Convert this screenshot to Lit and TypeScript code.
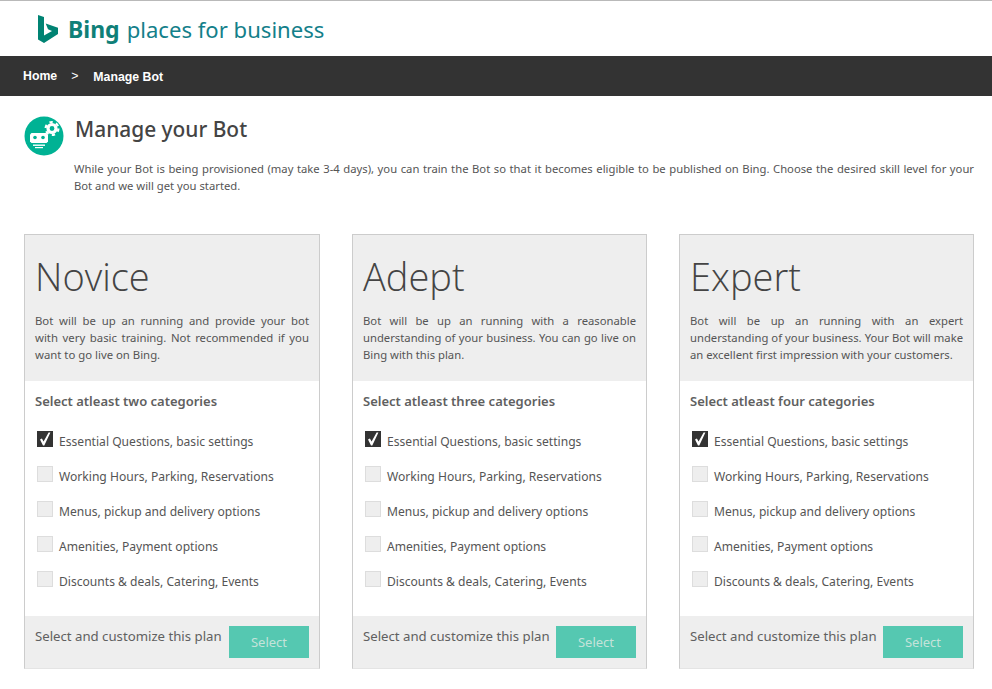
import { LitElement, html, css } from "lit";
import { customElement } from "lit/decorators.js";

const items = [
  "Essential Questions, basic settings",
  "Working Hours, Parking, Reservations",
  "Menus, pickup and delivery options",
  "Amenities, Payment options",
  "Discounts & deals, Catering, Events",
];

const plans = [
  {
    name: "Novice",
    desc: "Bot will be up an running and provide your bot with very basic training. Not recommended if you want to go live on Bing.",
    sel: "Select atleast two categories",
  },
  {
    name: "Adept",
    desc: "Bot will be up an running with a reasonable understanding of your business. You can go live on Bing with this plan.",
    sel: "Select atleast three categories",
  },
  {
    name: "Expert",
    desc: "Bot will be up an running with an expert understanding of your business. Your Bot will make an excellent first impression with your customers.",
    sel: "Select atleast four categories",
  },
];

@customElement("app-root")
export class AppRoot extends LitElement {
  static styles = css`
    :host {
      display: block;
      width: 992px;
      height: 689px;
      overflow: hidden;
      background: #fff;
      font-family: "Noto Sans", "Open Sans", sans-serif;
      color: #444;
    }
    .top {
      border-top: 1px solid #b9b9b9;
      display: flex;
      align-items: center;
      gap: 10px;
      padding-left: 38px;
      box-sizing: border-box;
      height: 56px;
    }
    .logo {
      flex: none;
    }
    .brand {
      font-size: 22.1px;
      color: #13808a;
      display: flex;
      align-items: baseline;
      gap: 7px;
    }
    .brand b {
      font-size: 23px;
      font-weight: 700;
      color: #0f8078;
    }
    .nav {
      height: 40px;
      background: #333;
      color: #fff;
      display: flex;
      align-items: center;
      padding-left: 23px;
      font-family: "Liberation Sans", sans-serif;
      font-size: 12.3px;
      font-weight: 700;
    }
    .nav .sep {
      margin: 0 15px 0 14px;
      font-weight: 400;
    }
    .nav .cur {
      padding-top: 2px;
    }
    .head {
      display: flex;
      padding: 20px 18px 0 24px;
      gap: 10px;
    }
    .icon {
      width: 40px;
      height: 40px;
      flex: none;
    }
    h1 {
      margin: -1px 0 0 1px;
      font-size: 20.9px;
      font-weight: 500;
      line-height: 28px;
      color: #444;
    }
    .intro {
      margin: 17px 0 0;
      font-size: 11.25px;
      line-height: 17px;
      text-align: justify;
      color: #555;
    }
    .cards {
      display: flex;
      gap: 32px;
      margin-top: 40px;
      padding: 0 18px 0 24px;
    }
    .card {
      flex: none;
      width: 295px;
      box-sizing: border-box;
      height: 435px;
      border: 1px solid #ccc;
      border-bottom: 1px solid #e4e4e4;
      display: flex;
      flex-direction: column;
    }
    .card:first-child {
      width: 296px;
    }
    .hero {
      background: #eee;
      height: 146px;
      box-sizing: border-box;
      padding: 15px 10px 0;
      flex: none;
    }
    .hero h2 {
      margin: 0;
      font-size: 38px;
      font-weight: 300;
      line-height: 52px;
      color: #444;
      font-family: "Open Sans", sans-serif;
    }
    .hero p {
      margin: 10px 0 0;
      font-size: 11.27px;
      line-height: 17px;
      text-align: justify;
      color: #555;
    }
    .card:first-child .hero p {
      font-size: 11.35px;
    }
    .body {
      flex: 1;
      padding: 10px 10px 0;
    }
    .sel {
      font-size: 13px;
      font-weight: 600;
      line-height: 20px;
      color: #606060;
      margin-bottom: 12px;
    }
    .row {
      display: flex;
      align-items: center;
      gap: 6px;
      height: 35px;
      font-size: 12.1px;
      color: #555;
      padding-left: 2px;
    }
    .row span {
      margin-top: 2px;
    }
    .box {
      width: 16px;
      height: 16px;
      box-sizing: border-box;
      background: #eee;
      border: 1px solid #ddd;
      flex: none;
      margin-top: -3px;
      display: flex;
      align-items: center;
      justify-content: center;
    }
    .box.on {
      background: #333;
      border-color: #333;
    }
    .foot {
      height: 52px;
      background: #eee;
      flex: none;
      display: flex;
      padding: 10px 10px 0;
      box-sizing: border-box;
      justify-content: space-between;
    }
    .foot span {
      font-size: 13.2px;
      color: #606060;
      line-height: 20px;
    }
    .btn {
      width: 80px;
      height: 32px;
      background: #55c8b1;
      color: #c4e3da;
      font-size: 13px;
      display: flex;
      align-items: center;
      justify-content: center;
    }
  `;

  render() {
    return html`
      <div class="top">
        <svg class="logo" width="20" height="28" viewBox="0 0 20 28" aria-hidden="true">
          <path fill="#008373" d="M0 0 6 2V20.5L14 16 10 14.2 7.7 8.5 20 12.8V19L6 28 0 24.5Z" />
        </svg>
        <div class="brand"><b>Bing</b><span>places for business</span></div>
      </div>
      <div class="nav"><span>Home</span><span class="sep">&gt;</span><span class="cur">Manage Bot</span></div>
      <div class="head">
        <svg class="icon" viewBox="0 0 40 40" aria-hidden="true">
          <circle cx="20" cy="20" r="19.5" fill="#00b294" />
          <path fill="#fff" d="M6 18.5 7.5 17H22.5L24 18.5V25.5L22.5 27H7.5L6 25.5Z" />
          <circle cx="11" cy="21.5" r="1.8" fill="#00b294" />
          <circle cx="19" cy="21.5" r="1.8" fill="#00b294" />
          <rect x="9" y="28.5" width="12" height="1.4" fill="#fff" />
          <rect x="11" y="31" width="8" height="1.2" fill="#fff" />
          <circle cx="28" cy="12.5" r="4" fill="none" stroke="#fff" stroke-width="3.2" />
          <circle cx="28" cy="12.5" r="6.4" fill="none" stroke="#fff" stroke-width="2.2" stroke-dasharray="3.3 3.4" />
        </svg>
        <div>
          <h1>Manage your Bot</h1>
          <p class="intro">While your Bot is being provisioned (may take 3-4 days), you can train the Bot so that it becomes eligible to be published on Bing. Choose the desired skill level for your Bot and we will get you started.</p>
        </div>
      </div>
      <div class="cards">
        ${plans.map(
          (p) => html`
            <div class="card">
              <div class="hero">
                <h2>${p.name}</h2>
                <p>${p.desc}</p>
              </div>
              <div class="body">
                <div class="sel">${p.sel}</div>
                ${items.map(
                  (t, i) => html`
                    <div class="row">
                      <div class="box ${i === 0 ? "on" : ""}">
                        ${i === 0
                          ? html`<svg width="14" height="14" viewBox="0 0 14 14"><path fill="#fff" d="M2 7.6 3.9 6.4 5.6 9.4 10.6 0.5H12.4L6.3 13.5H5Z" /></svg>`
                          : ""}
                      </div>
                      <span>${t}</span>
                    </div>
                  `
                )}
              </div>
              <div class="foot">
                <span>Select and customize this plan</span>
                <div class="btn">Select</div>
              </div>
            </div>
          `
        )}
      </div>
    `;
  }
}
